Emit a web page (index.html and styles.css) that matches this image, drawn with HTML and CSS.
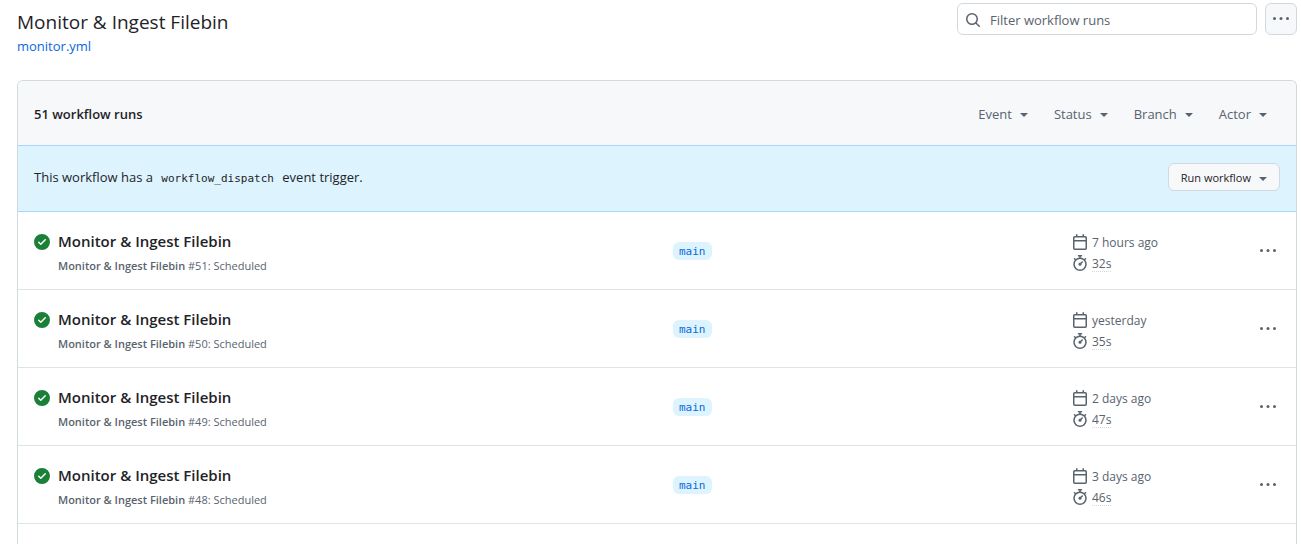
FILE: index.html
```html
<!DOCTYPE html>
<html lang="en">
<head>
    <meta charset="UTF-8">
    <meta name="viewport" content="width=device-width, initial-scale=1.0">
    <title>Workflow runs - Monitor &amp; Ingest Filebin</title>
    <link rel="stylesheet" href="styles.css">
</head>
<body>
    <svg class="sprite" aria-hidden="true">
        <symbol id="icon-check" viewBox="0 0 16 16"><path d="M8 16A8 8 0 1 1 8 0a8 8 0 0 1 0 16Zm3.78-9.72a.751.751 0 0 0-.018-1.042.751.751 0 0 0-1.042-.018L6.75 9.19 5.28 7.72a.751.751 0 0 0-1.042.018.751.751 0 0 0-.018 1.042l2 2a.75.75 0 0 0 1.06 0Z"/></symbol>
        <symbol id="icon-search" viewBox="0 0 16 16"><path d="M10.68 11.74a6 6 0 0 1-7.922-8.982 6 6 0 0 1 8.982 7.922l3.04 3.04a.749.749 0 0 1-.326 1.275.749.749 0 0 1-.734-.215ZM11.5 7a4.499 4.499 0 1 0-8.997 0A4.499 4.499 0 0 0 11.5 7Z"/></symbol>
        <symbol id="icon-dots" viewBox="0 0 16 16"><circle cx="1.5" cy="7.5" r="1.5"/><circle cx="8" cy="7.5" r="1.5"/><circle cx="14.5" cy="7.5" r="1.5"/></symbol>
        <symbol id="icon-calendar" viewBox="0 0 16 16"><path d="M4.75 0a.75.75 0 0 1 .75.75V2h5V.75a.75.75 0 0 1 1.5 0V2h1.25c.966 0 1.75.784 1.75 1.75v10.5A1.75 1.75 0 0 1 13.25 16H2.75A1.75 1.75 0 0 1 1 14.25V3.75C1 2.784 1.784 2 2.75 2H4V.75A.75.75 0 0 1 4.75 0ZM2.5 7.5v6.75c0 .138.112.25.25.25h10.5a.25.25 0 0 0 .25-.25V7.5Zm10.75-4H2.75a.25.25 0 0 0-.25.25V6h11V3.75a.25.25 0 0 0-.25-.25Z"/></symbol>
        <symbol id="icon-stopwatch" viewBox="0 0 16 16"><path d="M5.75.75A.75.75 0 0 1 6.5 0h3a.75.75 0 0 1 0 1.5h-.75v1l-.001.041a6.724 6.724 0 0 1 3.464 1.435l.007-.006.75-.75a.749.749 0 0 1 1.275.326.749.749 0 0 1-.215.734l-.75.75-.006.007a6.75 6.75 0 1 1-10.548 0L2.72 5.03l-.75-.75a.751.751 0 0 1 .018-1.042.751.751 0 0 1 1.042-.018l.75.75.007.006A6.72 6.72 0 0 1 7.25 2.541V1.5H6.5a.75.75 0 0 1-.75-.75ZM8 14.5a5.25 5.25 0 1 0-.001-10.501A5.25 5.25 0 0 0 8 14.5Zm.389-6.7 1.33-1.33a.75.75 0 1 1 1.061 1.06L9.45 8.861A1.503 1.503 0 0 1 8 10.75a1.499 1.499 0 1 1 .389-2.95Z"/></symbol>
    </svg>

    <header class="page-header">
        <div>
            <h1>Monitor &amp; Ingest Filebin</h1>
            <a class="file-link" href="#">monitor.yml</a>
        </div>
        <div class="actions">
            <label class="search">
                <svg class="icon"><use href="#icon-search"/></svg>
                <input type="text" placeholder="Filter workflow runs" aria-label="Filter workflow runs">
            </label>
            <button class="btn btn-icon" aria-label="Show workflow options"><svg class="icon"><use href="#icon-dots"/></svg></button>
        </div>
    </header>

    <main class="box">
        <div class="box-header">
            <strong>51 workflow runs</strong>
            <div class="filters">
                <button class="filter">Event</button>
                <button class="filter">Status</button>
                <button class="filter">Branch</button>
                <button class="filter">Actor</button>
            </div>
        </div>
        <div class="dispatch">
            <span class="dispatch-text">This workflow has a <code>workflow_dispatch</code> event trigger.</span>
            <button class="btn btn-run">Run workflow</button>
        </div>

        <div class="run">
            <svg class="icon success"><use href="#icon-check"/></svg>
            <div class="run-info">
                <a class="run-title" href="#">Monitor &amp; Ingest Filebin</a>
                <div class="run-desc"><b>Monitor &amp; Ingest Filebin</b> #51: Scheduled</div>
            </div>
            <div class="run-branch"><a class="branch" href="#">main</a></div>
            <div class="run-meta">
                <div><svg class="icon"><use href="#icon-calendar"/></svg><span>7 hours ago</span></div>
                <div><svg class="icon"><use href="#icon-stopwatch"/></svg><span class="duration">32s</span></div>
            </div>
            <button class="run-menu" aria-label="Show options"><svg class="icon"><use href="#icon-dots"/></svg></button>
        </div>
        <div class="run">
            <svg class="icon success"><use href="#icon-check"/></svg>
            <div class="run-info">
                <a class="run-title" href="#">Monitor &amp; Ingest Filebin</a>
                <div class="run-desc"><b>Monitor &amp; Ingest Filebin</b> #50: Scheduled</div>
            </div>
            <div class="run-branch"><a class="branch" href="#">main</a></div>
            <div class="run-meta">
                <div><svg class="icon"><use href="#icon-calendar"/></svg><span>yesterday</span></div>
                <div><svg class="icon"><use href="#icon-stopwatch"/></svg><span class="duration">35s</span></div>
            </div>
            <button class="run-menu" aria-label="Show options"><svg class="icon"><use href="#icon-dots"/></svg></button>
        </div>
        <div class="run">
            <svg class="icon success"><use href="#icon-check"/></svg>
            <div class="run-info">
                <a class="run-title" href="#">Monitor &amp; Ingest Filebin</a>
                <div class="run-desc"><b>Monitor &amp; Ingest Filebin</b> #49: Scheduled</div>
            </div>
            <div class="run-branch"><a class="branch" href="#">main</a></div>
            <div class="run-meta">
                <div><svg class="icon"><use href="#icon-calendar"/></svg><span>2 days ago</span></div>
                <div><svg class="icon"><use href="#icon-stopwatch"/></svg><span class="duration">47s</span></div>
            </div>
            <button class="run-menu" aria-label="Show options"><svg class="icon"><use href="#icon-dots"/></svg></button>
        </div>
        <div class="run">
            <svg class="icon success"><use href="#icon-check"/></svg>
            <div class="run-info">
                <a class="run-title" href="#">Monitor &amp; Ingest Filebin</a>
                <div class="run-desc"><b>Monitor &amp; Ingest Filebin</b> #48: Scheduled</div>
            </div>
            <div class="run-branch"><a class="branch" href="#">main</a></div>
            <div class="run-meta">
                <div><svg class="icon"><use href="#icon-calendar"/></svg><span>3 days ago</span></div>
                <div><svg class="icon"><use href="#icon-stopwatch"/></svg><span class="duration">46s</span></div>
            </div>
            <button class="run-menu" aria-label="Show options"><svg class="icon"><use href="#icon-dots"/></svg></button>
        </div>
    </main>
</body>
</html>
```

FILE: styles.css
```css
* {
    box-sizing: border-box;
}
body {
    display: flex;
    flex-direction: column;
    min-height: 100vh;
    margin: 0;
    padding: 3px 4px 0 17px;
    font-family: "Open Sans", "Noto Sans", sans-serif;
    font-size: 13px;
    line-height: 20px;
    color: #1f2328;
    background-color: #fff;
}
a {
    text-decoration: none;
}
button, input {
    font: inherit;
    color: inherit;
}
button {
    padding: 0;
    border: 0;
    background: none;
    cursor: pointer;
}
.sprite {
    display: none;
}
.icon {
    display: block;
    flex: none;
    width: 16px;
    height: 16px;
    fill: #59636e;
}

.page-header {
    display: flex;
    justify-content: space-between;
    align-items: flex-start;
    height: 77px;
}
h1 {
    margin: 5px 0 0;
    font-size: 19px;
    font-weight: 400;
    line-height: 28px;
}
.file-link {
    display: block;
    color: #0969da;
}
.actions {
    display: flex;
    gap: 8px;
}
.search {
    display: flex;
    align-items: center;
    gap: 9px;
    width: 300px;
    height: 32px;
    padding: 1px 7px 0;
    border: 1px solid #d1d9e0;
    border-radius: 6px;
}
.search input {
    flex: 1;
    min-width: 0;
    padding: 0;
    border: 0;
    outline: 0;
    background: none;
}
.search input::placeholder {
    color: #59636e;
    opacity: 1;
}
.btn {
    display: flex;
    align-items: center;
    justify-content: center;
    border: 1px solid #d1d9e0;
    border-radius: 6px;
    background-color: #f6f8fa;
}
.btn-icon {
    width: 32px;
    height: 32px;
}

.box {
    flex: 1;
    border: 1px solid #d1d9e0;
    border-bottom: 0;
    border-radius: 6px 6px 0 0;
}
.box-header {
    display: flex;
    justify-content: space-between;
    align-items: center;
    height: 64px;
    padding: 2px 29px 0 16px;
    border-radius: 5px 5px 0 0;
    background-color: #f6f8fa;
}
.box-header strong {
    font-weight: 600;
}
.filters {
    display: flex;
    gap: 26px;
    color: #59636e;
}
.filter::after, .btn-run::after {
    content: "";
    display: inline-block;
    margin-left: 8px;
    border: 4px solid transparent;
    border-top-color: currentColor;
    border-bottom: 0;
    vertical-align: 2px;
}
.dispatch {
    display: flex;
    justify-content: space-between;
    align-items: center;
    height: 67px;
    padding: 0 16px 3px;
    border-top: 1px solid #a7d8fb;
    border-bottom: 1px solid #a7d8fb;
    background-color: #ddf4ff;
}
.dispatch-text {
    padding-top: 2px;
}
.dispatch code {
    padding: 0 5px;
    font-family: "DejaVu Sans Mono", monospace;
    font-size: 11px;
}
.btn-run {
    height: 28px;
    padding: 1px 12px 0;
    font-size: 11px;
}
.btn-run::after {
    margin-top: 2px;
    border-top-color: #59636e;
}

.run {
    display: flex;
    align-items: flex-start;
    height: 78px;
    padding: 18px 16px 0;
    border-bottom: 1px solid #dfe3e8;
}
.success {
    margin: 4px 8px 0 0;
    fill: #1a7f37;
}
.run-info {
    flex: 615;
}
.run-title {
    display: block;
    font-size: 15px;
    font-weight: 600;
    line-height: 22px;
    color: #1f2328;
}
.run-desc {
    margin-top: 4px;
    font-size: 11px;
    color: #59636e;
}
.run-desc b {
    font-weight: 600;
}
.run-branch {
    flex: 399;
    padding-top: 12px;
}
.branch {
    display: inline-block;
    padding: 1px 6px 0;
    border-radius: 6px;
    font-family: "DejaVu Sans Mono", monospace;
    font-size: 11px;
    line-height: 17px;
    color: #0969da;
    background-color: #ddf4ff;
    vertical-align: top;
}
.run-meta {
    width: 188px;
    padding-top: 2px;
    font-size: 12px;
    line-height: 21px;
    color: #59636e;
}
.run-meta div {
    display: flex;
    align-items: flex-start;
    gap: 4px;
    height: 21px;
}
.run-meta .icon {
    margin-top: 2px;
}
.duration {
    height: 19px;
    border-bottom: 1px dotted #d1d9e0;
}
.run-menu {
    margin-top: 13px;
    margin-right: 4px;
}
```
